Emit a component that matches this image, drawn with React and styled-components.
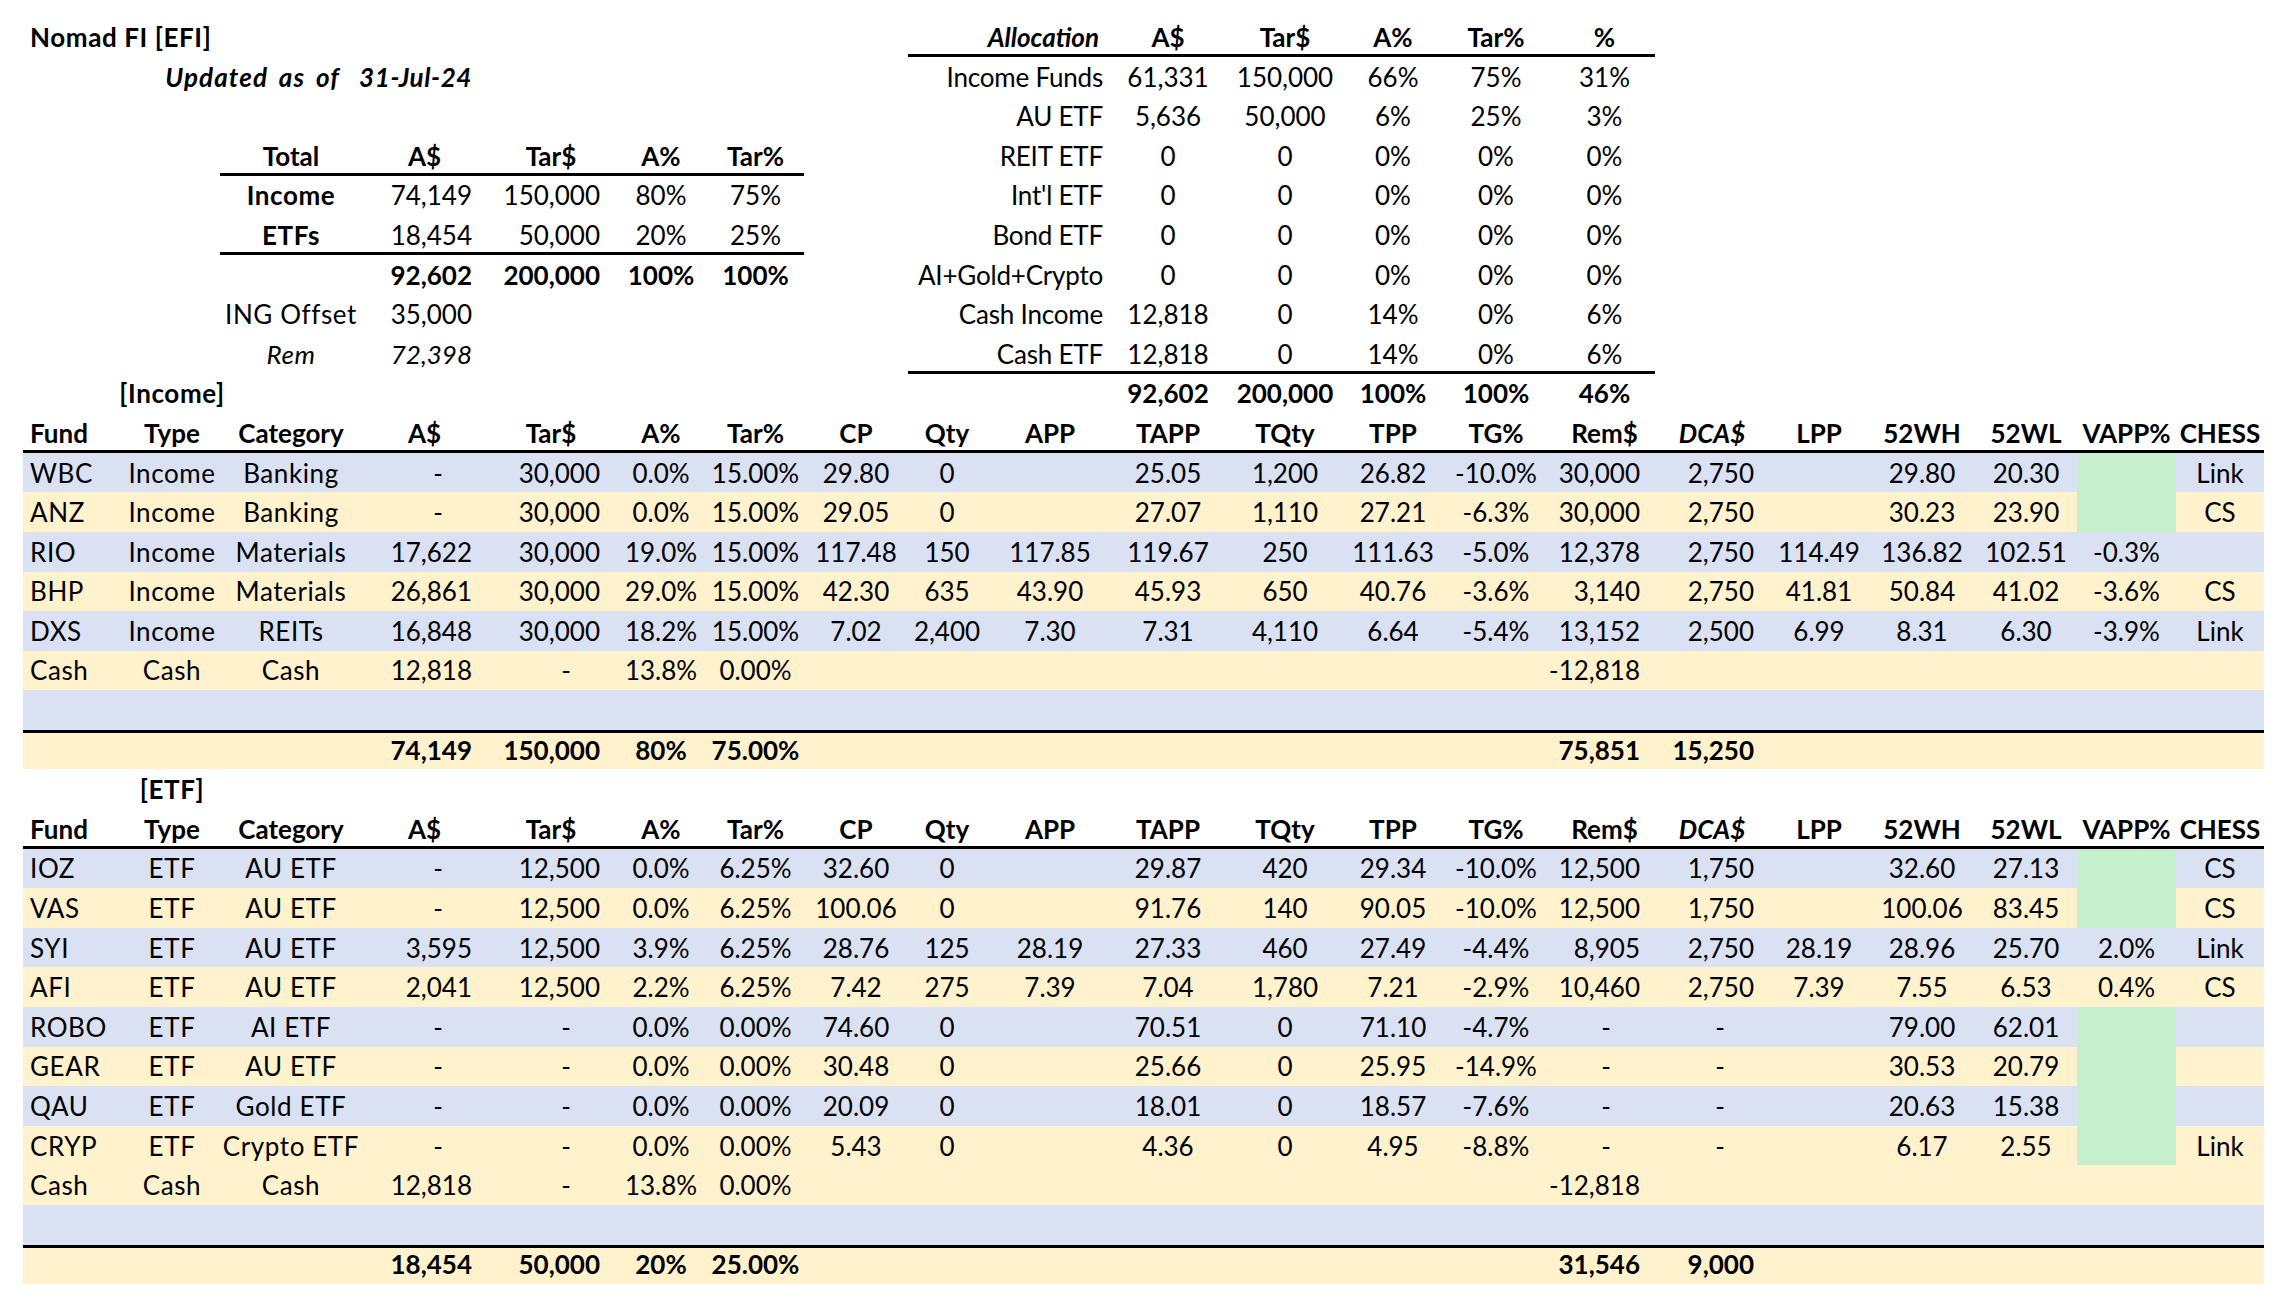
import React from 'react';
import styled, { createGlobalStyle, css } from 'styled-components';

const GlobalStyle = createGlobalStyle`
  html, body { margin: 0; padding: 0; background: #ffffff; }
  body { font-family: Lato, "Liberation Sans", sans-serif; color: #000; }
`;

const COLS = [101, 96, 142, 125, 128, 92, 97, 104, 78, 128, 108, 126, 90, 116, 101, 114, 100, 106, 102, 99, 88];
const TEMPLATE = COLS.map((w) => `${w}px`).join(' ');

const TONES = { blue: '#D9E1F2', yellow: '#FFF2CC', none: 'transparent' };

const Sheet = styled.div`
  display: flex;
  flex-direction: column;
  width: 2241px;
  padding: 17.2px 0 0 23px;
  font-size: 26px;
`;

const Row = styled.div`
  display: grid;
  grid-template-columns: ${TEMPLATE};
  height: 39.6px;
  box-sizing: border-box;
  background: ${(p) => TONES[p.$tone || 'none']};
  ${(p) => p.$ruleTop && css`box-shadow: inset 0 3px 0 #000;`}
  ${(p) => p.$ruleBottom && css`box-shadow: inset 0 -3px 0 #000;`}
`;

const Cell = styled.div`
  grid-column: ${(p) => (p.$col ? `${p.$col} / span ${p.$span || 1}` : `span ${p.$span || 1}`)};
  display: flex;
  align-items: center;
  justify-content: ${(p) => (p.$align === 'left' ? 'flex-start' : p.$align === 'right' ? 'flex-end' : 'center')};
  padding-left: ${(p) => (p.$align === 'left' ? 7 : 0)}px;
  padding-right: ${(p) => (p.$align === 'right' ? (p.$pad ?? 15) : 0)}px;
  min-width: 0;
  white-space: pre;
  letter-spacing: ${(p) => p.$spacing ?? 0}px;
  word-spacing: ${(p) => p.$wordSpacing ?? 0}px;
  font-weight: ${(p) => (p.$bold ? 700 : 400)};
  font-style: ${(p) => (p.$italic ? 'italic' : 'normal')};
  background: ${(p) => (p.$green ? '#C6EFCE' : 'transparent')};
  ${(p) => p.$rule === 'bottom' && css`box-shadow: inset 0 -3px 0 #000;`}
  ${(p) => p.$rule === 'top' && css`box-shadow: inset 0 3px 0 #000;`}
`;

const HEADERS = ['Fund', 'Type', 'Category', 'A$', 'Tar$', 'A%', 'Tar%', 'CP', 'Qty', 'APP', 'TAPP', 'TQty', 'TPP', 'TG%', 'Rem$', 'DCA$', 'LPP', '52WH', '52WL', 'VAPP%', 'CHESS'];
const ACCOUNTING = new Set([3, 4, 14, 15]);
const TEXTUAL = new Set([0, 1, 2]);

const incomeRows = [
  { tone: 'blue', green: true, v: ['WBC', 'Income', 'Banking', '-', '30,000', '0.0%', '15.00%', '29.80', '0', '', '25.05', '1,200', '26.82', '-10.0%', '30,000', '2,750', '', '29.80', '20.30', '', 'Link'] },
  { tone: 'yellow', green: true, v: ['ANZ', 'Income', 'Banking', '-', '30,000', '0.0%', '15.00%', '29.05', '0', '', '27.07', '1,110', '27.21', '-6.3%', '30,000', '2,750', '', '30.23', '23.90', '', 'CS'] },
  { tone: 'blue', v: ['RIO', 'Income', 'Materials', '17,622', '30,000', '19.0%', '15.00%', '117.48', '150', '117.85', '119.67', '250', '111.63', '-5.0%', '12,378', '2,750', '114.49', '136.82', '102.51', '-0.3%', ''] },
  { tone: 'yellow', v: ['BHP', 'Income', 'Materials', '26,861', '30,000', '29.0%', '15.00%', '42.30', '635', '43.90', '45.93', '650', '40.76', '-3.6%', '3,140', '2,750', '41.81', '50.84', '41.02', '-3.6%', 'CS'] },
  { tone: 'blue', v: ['DXS', 'Income', 'REITs', '16,848', '30,000', '18.2%', '15.00%', '7.02', '2,400', '7.30', '7.31', '4,110', '6.64', '-5.4%', '13,152', '2,500', '6.99', '8.31', '6.30', '-3.9%', 'Link'] },
  { tone: 'yellow', v: ['Cash', 'Cash', 'Cash', '12,818', '-', '13.8%', '0.00%', '', '', '', '', '', '', '', '-12,818', '', '', '', '', '', ''] },
  { tone: 'blue', v: [] },
];
const incomeTotal = ['', '', '', '74,149', '150,000', '80%', '75.00%', '', '', '', '', '', '', '', '75,851', '15,250', '', '', '', '', ''];

const etfRows = [
  { tone: 'blue', green: true, v: ['IOZ', 'ETF', 'AU ETF', '-', '12,500', '0.0%', '6.25%', '32.60', '0', '', '29.87', '420', '29.34', '-10.0%', '12,500', '1,750', '', '32.60', '27.13', '', 'CS'] },
  { tone: 'yellow', green: true, v: ['VAS', 'ETF', 'AU ETF', '-', '12,500', '0.0%', '6.25%', '100.06', '0', '', '91.76', '140', '90.05', '-10.0%', '12,500', '1,750', '', '100.06', '83.45', '', 'CS'] },
  { tone: 'blue', v: ['SYI', 'ETF', 'AU ETF', '3,595', '12,500', '3.9%', '6.25%', '28.76', '125', '28.19', '27.33', '460', '27.49', '-4.4%', '8,905', '2,750', '28.19', '28.96', '25.70', '2.0%', 'Link'] },
  { tone: 'yellow', v: ['AFI', 'ETF', 'AU ETF', '2,041', '12,500', '2.2%', '6.25%', '7.42', '275', '7.39', '7.04', '1,780', '7.21', '-2.9%', '10,460', '2,750', '7.39', '7.55', '6.53', '0.4%', 'CS'] },
  { tone: 'blue', green: true, v: ['ROBO', 'ETF', 'AI ETF', '-', '-', '0.0%', '0.00%', '74.60', '0', '', '70.51', '0', '71.10', '-4.7%', '-', '-', '', '79.00', '62.01', '', ''] },
  { tone: 'yellow', green: true, v: ['GEAR', 'ETF', 'AU ETF', '-', '-', '0.0%', '0.00%', '30.48', '0', '', '25.66', '0', '25.95', '-14.9%', '-', '-', '', '30.53', '20.79', '', ''] },
  { tone: 'blue', green: true, v: ['QAU', 'ETF', 'Gold ETF', '-', '-', '0.0%', '0.00%', '20.09', '0', '', '18.01', '0', '18.57', '-7.6%', '-', '-', '', '20.63', '15.38', '', ''] },
  { tone: 'yellow', green: true, v: ['CRYP', 'ETF', 'Crypto ETF', '-', '-', '0.0%', '0.00%', '5.43', '0', '', '4.36', '0', '4.95', '-8.8%', '-', '-', '', '6.17', '2.55', '', 'Link'] },
  { tone: 'yellow', v: ['Cash', 'Cash', 'Cash', '12,818', '-', '13.8%', '0.00%', '', '', '', '', '', '', '', '-12,818', '', '', '', '', '', ''] },
  { tone: 'blue', v: [] },
];
const etfTotal = ['', '', '', '18,454', '50,000', '20%', '25.00%', '', '', '', '', '', '', '', '31,546', '9,000', '', '', '', '', ''];

const allocation = [
  ['Income Funds', '61,331', '150,000', '66%', '75%', '31%'],
  ['AU ETF', '5,636', '50,000', '6%', '25%', '3%'],
  ['REIT ETF', '0', '0', '0%', '0%', '0%'],
  ["Int'l ETF", '0', '0', '0%', '0%', '0%'],
  ['Bond ETF', '0', '0', '0%', '0%', '0%'],
  ['AI+Gold+Crypto', '0', '0', '0%', '0%', '0%'],
  ['Cash Income', '12,818', '0', '14%', '0%', '6%'],
  ['Cash ETF', '12,818', '0', '14%', '0%', '6%'],
];
const allocationTotal = ['92,602', '200,000', '100%', '100%', '46%'];

const alignFor = (i) => (i === 0 ? 'left' : ACCOUNTING.has(i) ? 'right' : 'center');

function HeaderRow() {
  return (
    <Row $ruleBottom>
      {HEADERS.map((h, i) => (
        <Cell key={h} $align={i === 0 ? 'left' : 'center'} $bold $italic={h === 'DCA$'}>
          {h}
        </Cell>
      ))}
    </Row>
  );
}

function DataRow({ row }) {
  return (
    <Row $tone={row.tone}>
      {HEADERS.map((h, i) => {
        const val = row.v[i] || '';
        const acct = ACCOUNTING.has(i);
        return (
          <Cell
            key={h}
            $align={alignFor(i)}
            $pad={acct && val === '-' ? 44 : 15}
            $spacing={TEXTUAL.has(i) ? 0.6 : 0}
            $green={row.green && i === 19}
          >
            {val}
          </Cell>
        );
      })}
    </Row>
  );
}

function TotalRow({ values }) {
  return (
    <Row $tone="yellow" $ruleTop>
      {values.map((val, i) => (
        <Cell key={i} $align={alignFor(i)} $bold>
          {val}
        </Cell>
      ))}
    </Row>
  );
}

function AllocationCells({ row, rule, bold }) {
  return (
    <>
      <Cell $col={9} $span={2} $align="right" $pad={11} $spacing={-0.2} $rule={rule}>
        {row[0]}
      </Cell>
      {row.slice(1).map((v, i) => (
        <Cell key={i} $col={11 + i} $rule={rule} $bold={bold}>
          {v}
        </Cell>
      ))}
    </>
  );
}

export default function App() {
  return (
    <>
      <GlobalStyle />
      <Sheet>
        <Row>
          <Cell $col={1} $align="left" $bold $spacing={0.6}>Nomad FI [EFI]</Cell>
          <Cell $col={9} $span={2} $align="right" $pad={15} $bold $italic $rule="bottom">Allocation</Cell>
          {['A$', 'Tar$', 'A%', 'Tar%', '%'].map((h, i) => (
            <Cell key={h} $col={11 + i} $bold $rule="bottom">{h}</Cell>
          ))}
        </Row>
        <Row>
          <Cell $col={3} $align="right" $pad={22} $bold $italic $spacing={1.1} $wordSpacing={4}>Updated as of</Cell>
          <Cell $col={4} $align="right" $bold $italic $spacing={0.6}>31-Jul-24</Cell>
          <AllocationCells row={allocation[0]} />
        </Row>
        <Row>
          <AllocationCells row={allocation[1]} />
        </Row>
        <Row>
          <Cell $col={3} $bold $rule="bottom">Total</Cell>
          <Cell $col={4} $bold $rule="bottom">A$</Cell>
          <Cell $col={5} $bold $rule="bottom">Tar$</Cell>
          <Cell $col={6} $bold $rule="bottom">A%</Cell>
          <Cell $col={7} $bold $rule="bottom">Tar%</Cell>
          <AllocationCells row={allocation[2]} />
        </Row>
        <Row>
          <Cell $col={3} $bold $spacing={0.6}>Income</Cell>
          <Cell $col={4} $align="right">74,149</Cell>
          <Cell $col={5} $align="right">150,000</Cell>
          <Cell $col={6}>80%</Cell>
          <Cell $col={7}>75%</Cell>
          <AllocationCells row={allocation[3]} />
        </Row>
        <Row>
          <Cell $col={3} $bold $spacing={0.6} $rule="bottom">ETFs</Cell>
          <Cell $col={4} $align="right" $rule="bottom">18,454</Cell>
          <Cell $col={5} $align="right" $rule="bottom">50,000</Cell>
          <Cell $col={6} $rule="bottom">20%</Cell>
          <Cell $col={7} $rule="bottom">25%</Cell>
          <AllocationCells row={allocation[4]} />
        </Row>
        <Row>
          <Cell $col={4} $align="right" $bold>92,602</Cell>
          <Cell $col={5} $align="right" $bold>200,000</Cell>
          <Cell $col={6} $bold>100%</Cell>
          <Cell $col={7} $bold>100%</Cell>
          <AllocationCells row={allocation[5]} />
        </Row>
        <Row>
          <Cell $col={3} $spacing={0.6}>ING Offset</Cell>
          <Cell $col={4} $align="right">35,000</Cell>
          <AllocationCells row={allocation[6]} />
        </Row>
        <Row>
          <Cell $col={3} $italic $spacing={0.6}>Rem</Cell>
          <Cell $col={4} $align="right" $italic>72,398</Cell>
          <AllocationCells row={allocation[7]} rule="bottom" />
        </Row>
        <Row>
          <Cell $col={2} $bold $spacing={0.6}>[Income]</Cell>
          {allocationTotal.map((v, i) => (
            <Cell key={i} $col={11 + i} $bold>{v}</Cell>
          ))}
        </Row>

        <HeaderRow />
        {incomeRows.map((r, i) => (
          <DataRow key={i} row={r} />
        ))}
        <TotalRow values={incomeTotal} />

        <Row>
          <Cell $col={2} $bold $spacing={0.6}>[ETF]</Cell>
        </Row>
        <HeaderRow />
        {etfRows.map((r, i) => (
          <DataRow key={i} row={r} />
        ))}
        <TotalRow values={etfTotal} />
      </Sheet>
    </>
  );
}
